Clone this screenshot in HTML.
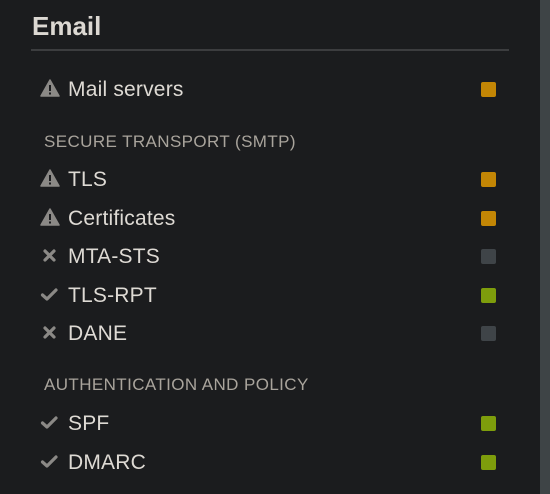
<!DOCTYPE html>
<html><head><style>
body{margin:0;width:550px;height:494px;background:#1b1c1e;font-family:"Liberation Sans",sans-serif;position:relative;overflow:hidden}
.strip{position:absolute;left:540px;top:0;width:10px;height:494px;background:#3e4446}
.title{position:absolute;left:32px;top:11px;font-size:26px;font-weight:bold;color:#dcd8d2}
.hr{position:absolute;left:31px;top:49px;width:478px;height:2px;background:#3c3d3f}
.row{position:absolute;left:40px;height:24px;line-height:24px;font-size:21px;letter-spacing:0.2px;color:#dedad4;white-space:nowrap}
.row svg{position:absolute;left:0;top:2px}
.row span{position:absolute;left:28px;top:1px}
.h{position:absolute;left:44px;font-size:17px;letter-spacing:0.4px;color:#a9a49c;line-height:20px}
.sq{position:absolute;left:481px;width:15px;height:15px;border-radius:2px}
.o{background:#c38605}.g{background:#7e9d0c}.n{background:#3f4448}
</style></head><body>
<div class="strip"></div>
<div class="title">Email</div>
<div class="hr"></div>

<div class="row" style="top:77px"><svg width="20" height="18" viewBox="0 0 20 18"><path d="M10 1 L19 17 L1 17 Z" fill="#8b8986" stroke="#8b8986" stroke-linejoin="round" stroke-width="1.5"/><rect x="9" y="6" width="2" height="6" fill="#1b1c1e"/><rect x="9" y="13.5" width="2" height="2" fill="#1b1c1e"/></svg><span>Mail servers</span></div>
<div class="sq o" style="top:82px"></div>

<div class="h" style="top:132px">SECURE TRANSPORT (SMTP)</div>

<div class="row" style="top:167px"><svg width="20" height="18" viewBox="0 0 20 18"><path d="M10 1 L19 17 L1 17 Z" fill="#8b8986" stroke="#8b8986" stroke-linejoin="round" stroke-width="1.5"/><rect x="9" y="6" width="2" height="6" fill="#1b1c1e"/><rect x="9" y="13.5" width="2" height="2" fill="#1b1c1e"/></svg><span>TLS</span></div>
<div class="sq o" style="top:172px"></div>

<div class="row" style="top:206px"><svg width="20" height="18" viewBox="0 0 20 18"><path d="M10 1 L19 17 L1 17 Z" fill="#8b8986" stroke="#8b8986" stroke-linejoin="round" stroke-width="1.5"/><rect x="9" y="6" width="2" height="6" fill="#1b1c1e"/><rect x="9" y="13.5" width="2" height="2" fill="#1b1c1e"/></svg><span>Certificates</span></div>
<div class="sq o" style="top:211px"></div>

<div class="row" style="top:244px"><svg width="20" height="18" viewBox="0 0 20 18"><path d="M5 5 L14 14 M14 5 L5 14" stroke="#8b8986" stroke-width="3.2" stroke-linecap="round"/></svg><span>MTA-STS</span></div>
<div class="sq n" style="top:249px"></div>

<div class="row" style="top:283px"><svg width="20" height="18" viewBox="0 0 20 18"><path d="M2.5 10 L7 14 L16 5" fill="none" stroke="#8b8986" stroke-width="3.2" stroke-linecap="round" stroke-linejoin="round"/></svg><span>TLS-RPT</span></div>
<div class="sq g" style="top:288px"></div>

<div class="row" style="top:321px"><svg width="20" height="18" viewBox="0 0 20 18"><path d="M5 5 L14 14 M14 5 L5 14" stroke="#8b8986" stroke-width="3.2" stroke-linecap="round"/></svg><span>DANE</span></div>
<div class="sq n" style="top:326px"></div>

<div class="h" style="top:375px">AUTHENTICATION AND POLICY</div>

<div class="row" style="top:411px"><svg width="20" height="18" viewBox="0 0 20 18"><path d="M2.5 10 L7 14 L16 5" fill="none" stroke="#8b8986" stroke-width="3.2" stroke-linecap="round" stroke-linejoin="round"/></svg><span>SPF</span></div>
<div class="sq g" style="top:416px"></div>

<div class="row" style="top:450px"><svg width="20" height="18" viewBox="0 0 20 18"><path d="M2.5 10 L7 14 L16 5" fill="none" stroke="#8b8986" stroke-width="3.2" stroke-linecap="round" stroke-linejoin="round"/></svg><span>DMARC</span></div>
<div class="sq g" style="top:455px"></div>
</body></html>
